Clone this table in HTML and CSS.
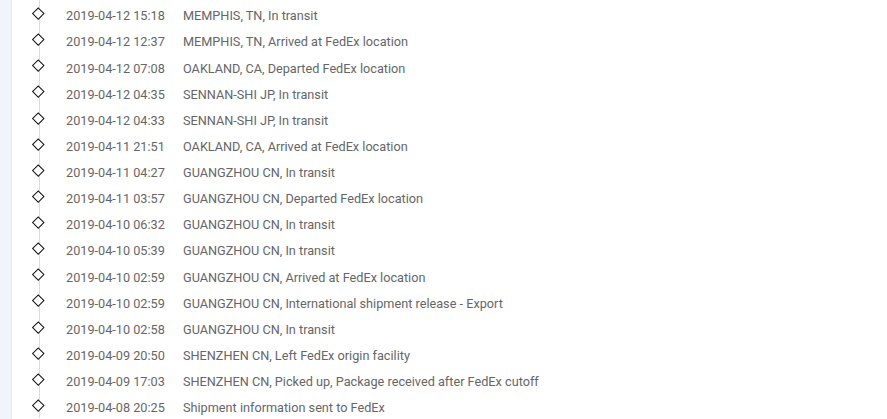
FILE: index.html
```html
<!DOCTYPE html>
<html>
<head>
<meta charset="utf-8">
<link rel="stylesheet" href="styles.css">
</head>
<body>
<div class="page">
  <aside class="side"></aside>
  <main class="main">
    <ul class="timeline">
      <li class="item"><span class="dot"></span><span class="time">2019-04-12 15:18</span><span class="desc">MEMPHIS, TN, In transit</span></li>
      <li class="item"><span class="dot"></span><span class="time">2019-04-12 12:37</span><span class="desc">MEMPHIS, TN, Arrived at FedEx location</span></li>
      <li class="item"><span class="dot"></span><span class="time">2019-04-12 07:08</span><span class="desc">OAKLAND, CA, Departed FedEx location</span></li>
      <li class="item"><span class="dot"></span><span class="time">2019-04-12 04:35</span><span class="desc">SENNAN-SHI JP, In transit</span></li>
      <li class="item"><span class="dot"></span><span class="time">2019-04-12 04:33</span><span class="desc">SENNAN-SHI JP, In transit</span></li>
      <li class="item"><span class="dot"></span><span class="time">2019-04-11 21:51</span><span class="desc">OAKLAND, CA, Arrived at FedEx location</span></li>
      <li class="item"><span class="dot"></span><span class="time">2019-04-11 04:27</span><span class="desc">GUANGZHOU CN, In transit</span></li>
      <li class="item"><span class="dot"></span><span class="time">2019-04-11 03:57</span><span class="desc">GUANGZHOU CN, Departed FedEx location</span></li>
      <li class="item"><span class="dot"></span><span class="time">2019-04-10 06:32</span><span class="desc">GUANGZHOU CN, In transit</span></li>
      <li class="item"><span class="dot"></span><span class="time">2019-04-10 05:39</span><span class="desc">GUANGZHOU CN, In transit</span></li>
      <li class="item"><span class="dot"></span><span class="time">2019-04-10 02:59</span><span class="desc">GUANGZHOU CN, Arrived at FedEx location</span></li>
      <li class="item"><span class="dot"></span><span class="time">2019-04-10 02:59</span><span class="desc">GUANGZHOU CN, International shipment release - Export</span></li>
      <li class="item"><span class="dot"></span><span class="time">2019-04-10 02:58</span><span class="desc">GUANGZHOU CN, In transit</span></li>
      <li class="item"><span class="dot"></span><span class="time">2019-04-09 20:50</span><span class="desc">SHENZHEN CN, Left FedEx origin facility</span></li>
      <li class="item"><span class="dot"></span><span class="time">2019-04-09 17:03</span><span class="desc">SHENZHEN CN, Picked up, Package received after FedEx cutoff</span></li>
      <li class="item"><span class="dot"></span><span class="time">2019-04-08 20:25</span><span class="desc">Shipment information sent to FedEx</span></li>
    </ul>
  </main>
</div>
</body>
</html>
```
FILE: styles.css
```css
html, body {
  margin: 0;
  padding: 0;
  background: #fff;
}
body {
  font-family: Roboto, "Liberation Sans", sans-serif;
  font-size: 12.7px;
  color: #666;
}
.page {
  display: flex;
  height: 419px;
  overflow: hidden;
}
.side {
  width: 11px;
  flex: none;
  background: #f1f4fb;
  border-right: 1px solid #e3e7ee;
}
.main {
  flex: 1;
}
.timeline {
  list-style: none;
  margin: 0;
  padding: 0 0 0 22px;
  position: relative;
}
.timeline::before {
  content: "";
  position: absolute;
  left: 27px;
  top: 0;
  bottom: 0;
  width: 1px;
  background: #dcdcdc;
}
.item {
  position: relative;
  display: flex;
  align-items: center;
  height: 26.13px;
  line-height: 16px;
  padding-top: 6.5px;
  box-sizing: border-box;
}
.dot {
  flex: none;
  width: 6.5px;
  height: 6.5px;
  border: 1.5px solid #111;
  background: #fff;
  transform: rotate(45deg);
  position: relative;
  z-index: 1;
  margin: -6px 23.5px 0 0;
}
.time {
  width: 117px;
  flex: none;
}
.desc {
  white-space: nowrap;
}
```
